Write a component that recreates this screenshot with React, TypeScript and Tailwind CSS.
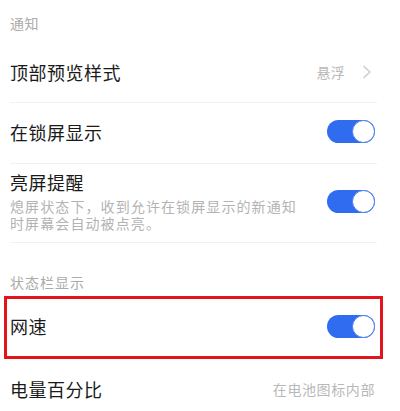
import React from "react";

const font = { fontFamily: '"Noto Sans CJK SC", "Noto Sans", sans-serif' };

function Toggle({ className = "" }: { className?: string }) {
  return (
    <div className={`relative flex h-[23px] w-[48px] shrink-0 items-center justify-end rounded-full bg-[#306cf0] ${className}`}>
      <div className="h-[23px] w-[23px] rounded-full border border-[#4a7ff2] bg-white" />
    </div>
  );
}

function Divider() {
  return <div className="ml-[10px] mr-[23px] h-px bg-[#f1f1f1]" />;
}

export default function App() {
  return (
    <div className="w-[400px] h-[411px] overflow-hidden bg-white" style={font}>
      <div className="h-[41px] pl-[10px] pt-[13px] text-[14px] leading-[20px] tracking-[0.5px] text-[#ababab]">
        通知
      </div>
      <div className="flex h-[61px] items-center pl-[10px] pr-[28px]">
        <div className="flex-1 text-[18px] leading-[24px] tracking-[0.5px] text-[#1a1a1a]">顶部预览样式</div>
        <div className="text-[14px] leading-[20px] tracking-[0.3px] text-[#b8b8b8]">悬浮</div>
        <svg className="ml-[17px]" width="10" height="14" viewBox="0 0 10 14" fill="none">
          <path d="M1.5 1 L8 7 L1.5 13" stroke="#c9c9c9" strokeWidth="1.3" />
        </svg>
      </div>
      <Divider />
      <div className="flex h-[60px] items-center pb-[3px] pl-[10px] pr-[25px]">
        <div className="flex-1 text-[18px] leading-[24px] tracking-[0.5px] text-[#1a1a1a]">在锁屏显示</div>
        <Toggle />
      </div>
      <Divider />
      <div className="flex h-[78px] items-center pl-[10px] pr-[25px]">
        <div className="flex-1 self-start pt-[7px]">
          <div className="text-[18px] leading-[22px] tracking-[0.5px] text-[#1a1a1a]">亮屏提醒</div>
          <div className="mt-[5px] text-[14px] leading-[17px] tracking-[1.1px] text-[#b3b3b3]">
            熄屏状态下，收到允许在锁屏显示的新通知
            <br />
            时屏幕会自动被点亮。
          </div>
        </div>
        <Toggle className="mb-[3px]" />
      </div>
      <Divider />
      <div className="flex h-[53px] items-end pb-[4px] pl-[10px] text-[14px] leading-[20px] tracking-[1px] text-[#ababab]">
        状态栏显示
      </div>
      <div className="ml-[4px] flex h-[63px] w-[379px] items-center border-[3px] border-[#e3141c] pb-[3px] pl-[3px] pr-[5px]">
        <div className="flex-1 text-[18px] leading-[24px] tracking-[0.5px] text-[#1a1a1a]">网速</div>
        <Toggle />
      </div>
      <div className="flex h-[52px] items-center pt-[7px] pl-[10px] pr-[25px]">
        <div className="flex-1 text-[18px] leading-[24px] tracking-[0.5px] text-[#1a1a1a]">电量百分比</div>
        <div className="text-[14px] leading-[20px] tracking-[0.6px] text-[#b8b8b8]">在电池图标内部</div>
      </div>
    </div>
  );
}
